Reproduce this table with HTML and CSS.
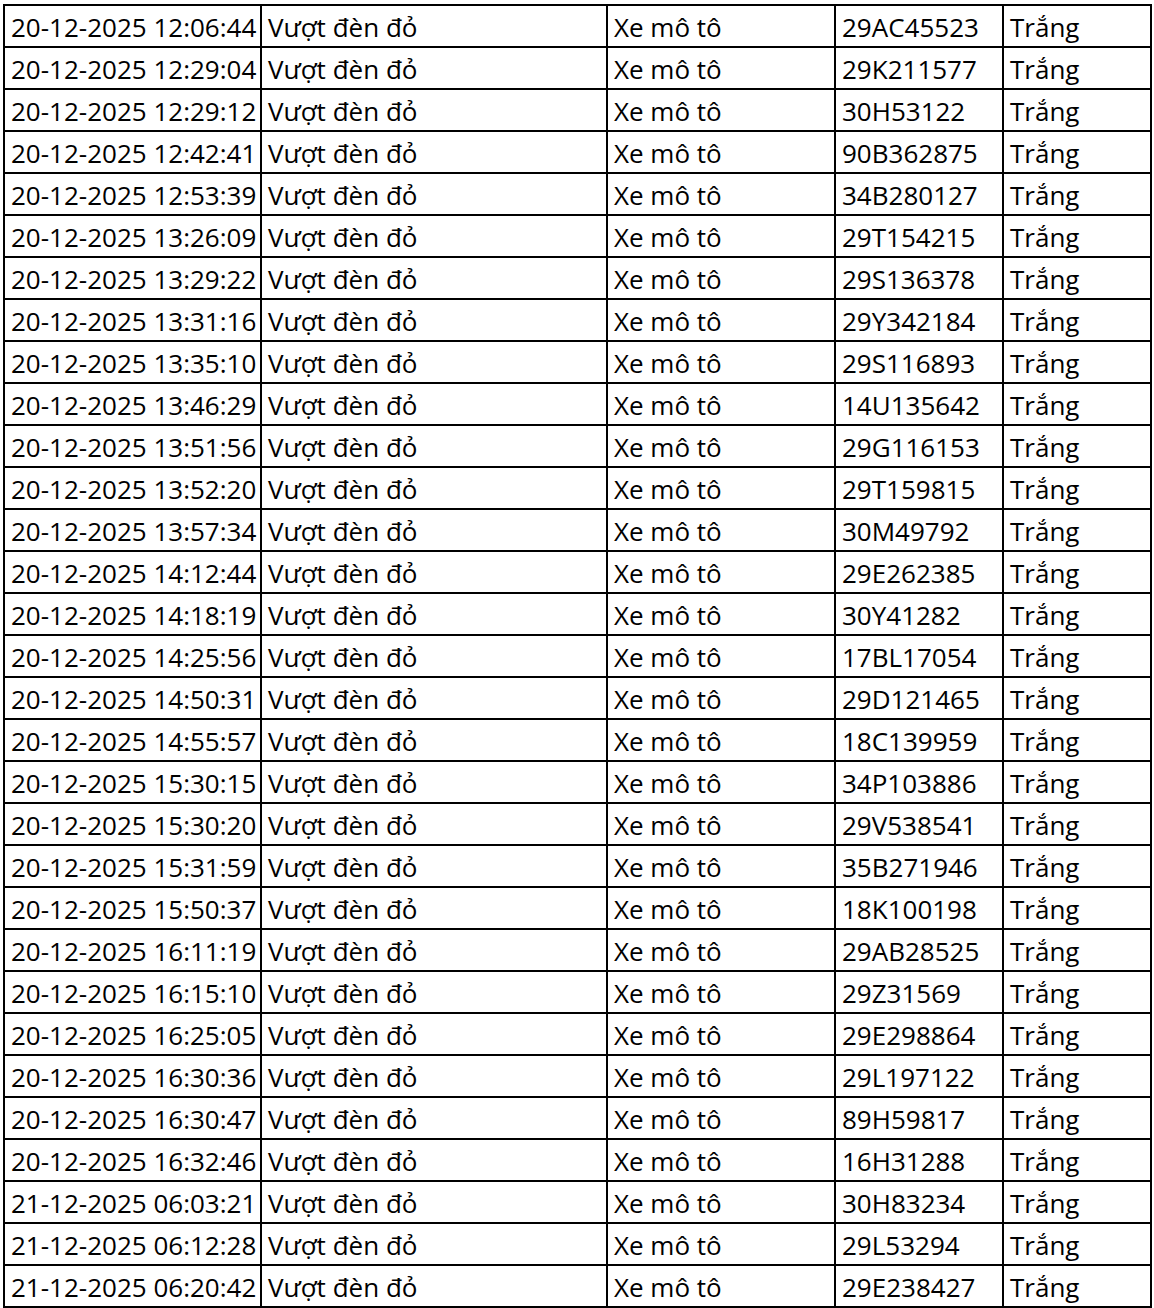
FILE: index.html
```html
<!DOCTYPE html>
<html lang="vi">
<head>
<meta charset="utf-8">
<title>Danh sách vi phạm</title>
<link rel="stylesheet" href="styles.css">
</head>
<body>
<div class="sheet">
<div class="c">20-12-2025 12:06:44</div><div class="c">Vượt đèn đỏ</div><div class="c">Xe mô tô</div><div class="c">29AC45523</div><div class="c">Trắng</div>
<div class="c">20-12-2025 12:29:04</div><div class="c">Vượt đèn đỏ</div><div class="c">Xe mô tô</div><div class="c">29K211577</div><div class="c">Trắng</div>
<div class="c">20-12-2025 12:29:12</div><div class="c">Vượt đèn đỏ</div><div class="c">Xe mô tô</div><div class="c">30H53122</div><div class="c">Trắng</div>
<div class="c">20-12-2025 12:42:41</div><div class="c">Vượt đèn đỏ</div><div class="c">Xe mô tô</div><div class="c">90B362875</div><div class="c">Trắng</div>
<div class="c">20-12-2025 12:53:39</div><div class="c">Vượt đèn đỏ</div><div class="c">Xe mô tô</div><div class="c">34B280127</div><div class="c">Trắng</div>
<div class="c">20-12-2025 13:26:09</div><div class="c">Vượt đèn đỏ</div><div class="c">Xe mô tô</div><div class="c">29T154215</div><div class="c">Trắng</div>
<div class="c">20-12-2025 13:29:22</div><div class="c">Vượt đèn đỏ</div><div class="c">Xe mô tô</div><div class="c">29S136378</div><div class="c">Trắng</div>
<div class="c">20-12-2025 13:31:16</div><div class="c">Vượt đèn đỏ</div><div class="c">Xe mô tô</div><div class="c">29Y342184</div><div class="c">Trắng</div>
<div class="c">20-12-2025 13:35:10</div><div class="c">Vượt đèn đỏ</div><div class="c">Xe mô tô</div><div class="c">29S116893</div><div class="c">Trắng</div>
<div class="c">20-12-2025 13:46:29</div><div class="c">Vượt đèn đỏ</div><div class="c">Xe mô tô</div><div class="c">14U135642</div><div class="c">Trắng</div>
<div class="c">20-12-2025 13:51:56</div><div class="c">Vượt đèn đỏ</div><div class="c">Xe mô tô</div><div class="c">29G116153</div><div class="c">Trắng</div>
<div class="c">20-12-2025 13:52:20</div><div class="c">Vượt đèn đỏ</div><div class="c">Xe mô tô</div><div class="c">29T159815</div><div class="c">Trắng</div>
<div class="c">20-12-2025 13:57:34</div><div class="c">Vượt đèn đỏ</div><div class="c">Xe mô tô</div><div class="c">30M49792</div><div class="c">Trắng</div>
<div class="c">20-12-2025 14:12:44</div><div class="c">Vượt đèn đỏ</div><div class="c">Xe mô tô</div><div class="c">29E262385</div><div class="c">Trắng</div>
<div class="c">20-12-2025 14:18:19</div><div class="c">Vượt đèn đỏ</div><div class="c">Xe mô tô</div><div class="c">30Y41282</div><div class="c">Trắng</div>
<div class="c">20-12-2025 14:25:56</div><div class="c">Vượt đèn đỏ</div><div class="c">Xe mô tô</div><div class="c">17BL17054</div><div class="c">Trắng</div>
<div class="c">20-12-2025 14:50:31</div><div class="c">Vượt đèn đỏ</div><div class="c">Xe mô tô</div><div class="c">29D121465</div><div class="c">Trắng</div>
<div class="c">20-12-2025 14:55:57</div><div class="c">Vượt đèn đỏ</div><div class="c">Xe mô tô</div><div class="c">18C139959</div><div class="c">Trắng</div>
<div class="c">20-12-2025 15:30:15</div><div class="c">Vượt đèn đỏ</div><div class="c">Xe mô tô</div><div class="c">34P103886</div><div class="c">Trắng</div>
<div class="c">20-12-2025 15:30:20</div><div class="c">Vượt đèn đỏ</div><div class="c">Xe mô tô</div><div class="c">29V538541</div><div class="c">Trắng</div>
<div class="c">20-12-2025 15:31:59</div><div class="c">Vượt đèn đỏ</div><div class="c">Xe mô tô</div><div class="c">35B271946</div><div class="c">Trắng</div>
<div class="c">20-12-2025 15:50:37</div><div class="c">Vượt đèn đỏ</div><div class="c">Xe mô tô</div><div class="c">18K100198</div><div class="c">Trắng</div>
<div class="c">20-12-2025 16:11:19</div><div class="c">Vượt đèn đỏ</div><div class="c">Xe mô tô</div><div class="c">29AB28525</div><div class="c">Trắng</div>
<div class="c">20-12-2025 16:15:10</div><div class="c">Vượt đèn đỏ</div><div class="c">Xe mô tô</div><div class="c">29Z31569</div><div class="c">Trắng</div>
<div class="c">20-12-2025 16:25:05</div><div class="c">Vượt đèn đỏ</div><div class="c">Xe mô tô</div><div class="c">29E298864</div><div class="c">Trắng</div>
<div class="c">20-12-2025 16:30:36</div><div class="c">Vượt đèn đỏ</div><div class="c">Xe mô tô</div><div class="c">29L197122</div><div class="c">Trắng</div>
<div class="c">20-12-2025 16:30:47</div><div class="c">Vượt đèn đỏ</div><div class="c">Xe mô tô</div><div class="c">89H59817</div><div class="c">Trắng</div>
<div class="c">20-12-2025 16:32:46</div><div class="c">Vượt đèn đỏ</div><div class="c">Xe mô tô</div><div class="c">16H31288</div><div class="c">Trắng</div>
<div class="c">21-12-2025 06:03:21</div><div class="c">Vượt đèn đỏ</div><div class="c">Xe mô tô</div><div class="c">30H83234</div><div class="c">Trắng</div>
<div class="c">21-12-2025 06:12:28</div><div class="c">Vượt đèn đỏ</div><div class="c">Xe mô tô</div><div class="c">29L53294</div><div class="c">Trắng</div>
<div class="c">21-12-2025 06:20:42</div><div class="c">Vượt đèn đỏ</div><div class="c">Xe mô tô</div><div class="c">29E238427</div><div class="c">Trắng</div>
</div>
</body>
</html>
```
FILE: styles.css
```css
html, body {
  margin: 0;
  padding: 0;
  background: #ffffff;
}
body {
  padding: 4px 0 0 3px;
}
.sheet {
  display: grid;
  grid-template-columns: 257px 346px 228px 168px 148px;
  grid-auto-rows: 42px;
  width: max-content;
  border-right: 2px solid #000;
  border-bottom: 2px solid #000;
  font-family: "Open Sans", "Noto Sans", sans-serif;
  font-size: 26px;
  color: #000;
}
.c {
  box-sizing: border-box;
  border-left: 2px solid #000;
  border-top: 2px solid #000;
  padding: 2px 0 0 6px;
  line-height: 38px;
  white-space: nowrap;
  overflow: hidden;
}
```
